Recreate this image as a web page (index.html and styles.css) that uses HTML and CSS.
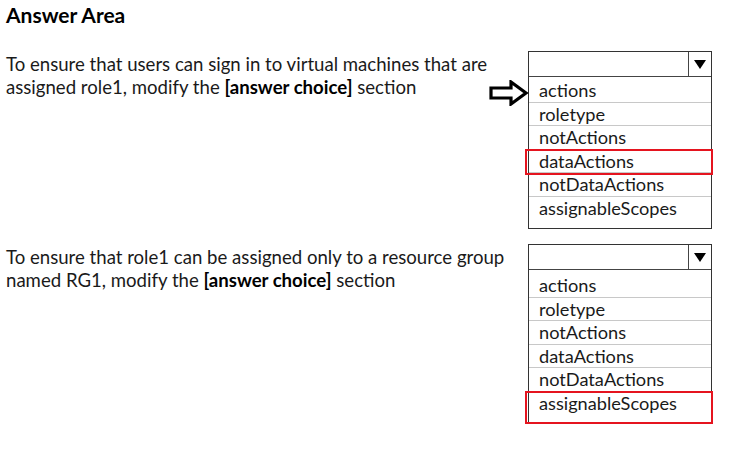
FILE: index.html
```html
<!DOCTYPE html>
<html lang="en">
<head>
<meta charset="utf-8">
<title>Answer Area</title>
<link rel="stylesheet" href="styles.css">
</head>
<body>
<div class="page">
  <h1 class="title">Answer Area</h1>

  <div class="question q1">
    <p class="prompt">To ensure that users can sign in to virtual machines that are<br>assigned role1, modify the <b>[answer choice]</b> section</p>
    <div class="dropdown">
      <svg class="pointer" width="40" height="26" viewBox="0 0 40 26" aria-hidden="true">
        <polygon points="2,8 22,8 22,2 37,13 22,24 22,18 2,18" fill="#fff" stroke="#000" stroke-width="3.2" stroke-linejoin="miter"/>
      </svg>
      <div class="dd-head">
        <span class="dd-value"></span>
        <span class="dd-btn"><span class="tri"></span></span>
      </div>
      <ul class="dd-list">
        <li>actions</li>
        <li>roletype</li>
        <li>notActions</li>
        <li class="picked">dataActions</li>
        <li>notDataActions</li>
        <li>assignableScopes</li>
      </ul>
    </div>
  </div>

  <div class="question q2">
    <p class="prompt">To ensure that role1 can be assigned only to a resource group<br>named RG1, modify the <b>[answer choice]</b> section</p>
    <div class="dropdown">
      <div class="dd-head">
        <span class="dd-value"></span>
        <span class="dd-btn"><span class="tri"></span></span>
      </div>
      <ul class="dd-list">
        <li>actions</li>
        <li>roletype</li>
        <li>notActions</li>
        <li>dataActions</li>
        <li>notDataActions</li>
        <li class="picked last-picked">assignableScopes</li>
      </ul>
    </div>
  </div>
</div>
</body>
</html>
```

FILE: styles.css
```css
* { box-sizing: border-box; }

html, body {
  margin: 0;
  padding: 0;
  background: #fff;
}

body {
  font-family: "Lato", "Open Sans", "Noto Sans", sans-serif;
  color: #1a1a1a;
  width: 735px;
  height: 461px;
  overflow: hidden;
}

.page {
  padding: 3px 0 0 6px;
}

.title {
  margin: 0;
  font-size: 21px;
  font-weight: 700;
  line-height: 24px;
  color: #000;
}

.question {
  display: grid;
  grid-template-columns: 510px 184px;
  column-gap: 12px;
  align-items: start;
}

.q1 { margin-top: 24px; }
.q2 { margin-top: 15px; }

.prompt {
  margin: 2px 0 0 0;
  font-size: 18.6px;
  line-height: 23px;
  white-space: nowrap;
}

.prompt b {
  font-weight: 700;
  color: #000;
}

.dropdown {
  position: relative;
  border: 1.5px solid #333;
  background: #fff;
}

.pointer {
  position: absolute;
  left: -40px;
  top: 28px;
}

.dd-head {
  display: flex;
  height: 25px;
  border-bottom: 1.5px solid #444;
}

.dd-value { flex: 1; }

.dd-btn {
  width: 23px;
  border-left: 1.5px solid #444;
  display: flex;
  align-items: center;
  justify-content: center;
}

.tri {
  width: 0;
  height: 0;
  border-left: 6px solid transparent;
  border-right: 6px solid transparent;
  border-top: 9px solid #000;
}

.dd-list {
  list-style: none;
  margin: 0;
  padding: 2px 0 8px 0;
}

.dd-list li {
  position: relative;
  height: 23.5px;
  line-height: 23px;
  padding-left: 10px;
  font-size: 18.2px;
  border-bottom: 1px solid #c8c8c8;
}

.dd-list li:last-child {
  border-bottom: none;
}

.q2 .dd-list {
  padding-top: 4px;
  padding-bottom: 7px;
}

.picked::after {
  content: "";
  position: absolute;
  left: -4px;
  right: -2px;
  top: -1px;
  bottom: -3px;
  border: 2.2px solid #e5141f;
}

.last-picked::after {
  bottom: -9px;
}
```
